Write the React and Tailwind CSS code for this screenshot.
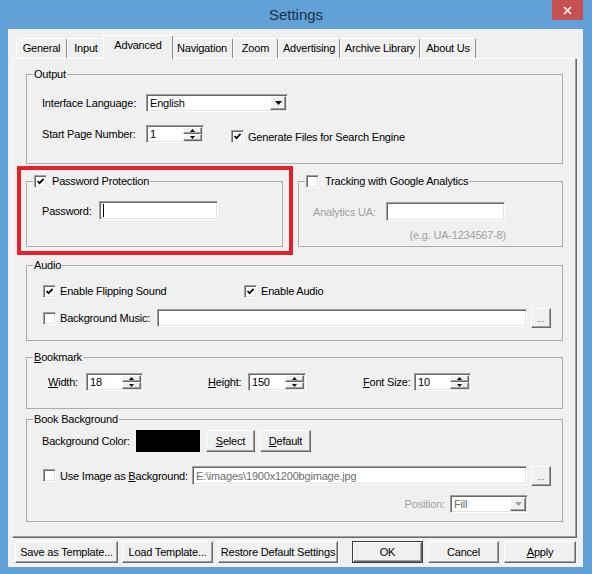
import React from "react";

const raised = "bg-[#f0f0f0] border border-t-white border-l-white border-r-[#696969] border-b-[#696969] shadow-[inset_-1px_-1px_0_#a0a0a0]";
const sunken = "border border-t-[#a0a0a0] border-l-[#a0a0a0] border-r-white border-b-white shadow-[inset_1px_1px_0_#696969,inset_-1px_-1px_0_#e3e3e3]";

const TABS = [
    ["General", 51], ["Input", 38], ["Advanced", 66], ["Navigation", 62],
    ["Zoom", 45], ["Advertising", 62], ["Archive Library", 80], ["About Us", 56],
];

function Check({ checked }) {
    return (
        <span className={`inline-flex w-[13px] h-[13px] shrink-0 items-center justify-center bg-white ${sunken}`}>
            {checked && (
                <svg width="9" height="9" viewBox="0 0 9 9">
                    <path d="M1.5 4 L3.5 6.2 L7.6 1.8" stroke="#000" strokeWidth="1.7" fill="none" />
                </svg>
            )}
        </span>
    );
}

function Tri({ up, w = 5, h = 3, color = "#000" }) {
    return (
        <svg width={w} height={h} viewBox={`0 0 ${w} ${h}`}>
            <polygon points={up ? `0,${h} ${w},${h} ${w / 2},0` : `0,0 ${w},0 ${w / 2},${h}`} fill={color} />
        </svg>
    );
}

function Spin({ value, width }) {
    return (
        <div className={`flex h-[18px] bg-white ${sunken} p-[1px]`} style={{ width }}>
            <span className="flex-1 pl-[2px] leading-[14px]">{value}</span>
            <div className="flex flex-col w-[19px]">
                <div className={`flex-1 flex items-center justify-center ${raised}`}><Tri up /></div>
                <div className={`flex-1 flex items-center justify-center ${raised}`}><Tri /></div>
            </div>
        </div>
    );
}

function Combo({ value, width, disabled }) {
    return (
        <div className={`flex h-[18px] bg-white ${sunken} p-[1px]`} style={{ width }}>
            <span className={`flex-1 pl-[2px] leading-[14px] ${disabled ? "text-[#6d6d6d]" : ""}`}>{value}</span>
            <div className={`w-[16px] flex items-center justify-center ${raised}`}>
                <Tri w={7} h={4} color={disabled ? "#a0a0a0" : "#000"} />
            </div>
        </div>
    );
}

function Dots() {
    return (
        <div className={`w-[20px] h-[20px] flex items-end justify-center pb-[3px] text-[9px] leading-[9px] text-[#6d6d6d] ${raised}`}>...</div>
    );
}

function Group({ title, className = "", children }) {
    return (
        <fieldset className={`border border-[#acacac] ${className}`}>
            <legend className="ml-[6px] px-[1px] leading-[14px]">{title}</legend>
            {children}
        </fieldset>
    );
}

function Btn({ children, width, className = "" }) {
    return (
        <div className={`h-[22px] flex items-center justify-center ${raised} ${className}`} style={{ width }}>
            {children}
        </div>
    );
}

export default function App() {
    return (
        <div className="w-[592px] h-[574px] bg-[#62a0d8] flex flex-col font-['Liberation_Sans',Arial,sans-serif] text-[11px] leading-[14px] text-black tracking-[-0.2px]">
            {/* title bar */}
            <div className="h-[29px] relative flex items-center justify-center">
                <span className="text-[15px] tracking-normal text-[#1d3047]">Settings</span>
                <div className="absolute right-[9px] top-0 w-[31px] h-[20px] bg-[#c75050] flex items-center justify-center">
                    <svg width="9" height="9" viewBox="0 0 9 9">
                        <path d="M1 1 L8 8 M8 1 L1 8" stroke="#fff" strokeWidth="1.6" />
                    </svg>
                </div>
            </div>

            {/* client */}
            <div className="ml-[8px] mr-[9px] h-[538px] bg-[#f0f0f0] flex flex-col pt-[6px] pl-[4px] pr-[7px]">
                {/* tabs */}
                <div className="h-[23px] flex items-end pl-[4px]">
                    {TABS.map(([name, w]) => name === "Advanced" ? (
                        <div key={name} className="relative z-10 -mx-[2px] -mb-[1px] h-[24px] pt-[2px] text-center bg-[#f0f0f0] border border-b-0 border-t-white border-l-white border-r-[#8a8a8a] rounded-t-[2px]" style={{ width: w + 4 }}>
                            {name}
                        </div>
                    ) : (
                        <div key={name} className="h-[20px] pt-[2px] text-center border border-b-0 border-t-white border-l-white border-r-[#8a8a8a] rounded-t-[2px]" style={{ width: w }}>
                            {name}
                        </div>
                    ))}
                </div>

                {/* tab page */}
                <div className="h-[479px] border border-t-white border-l-white border-r-[#a0a0a0] border-b-[#a0a0a0] shadow-[1px_1px_0_#696969] pt-[8px] pl-[13px] pr-[12px] flex flex-col">
                    <Group title="Output" className="h-[97px]">
                        <div className="pt-[13px] pl-[15px]">
                            <div className="flex items-center h-[18px]">
                                <span className="w-[104px]">Interface Language:</span>
                                <Combo value="English" width={142} />
                            </div>
                            <div className="flex items-center h-[18px] mt-[13px]">
                                <span className="w-[104px]">Start Page Number:</span>
                                <Spin value="1" width={58} />
                                <span className="ml-[27px] mt-[5px] flex items-center gap-[4px]">
                                    <Check checked />
                                    <span>Generate Files for Search Engine</span>
                                </span>
                            </div>
                        </div>
                    </Group>

                    <div className="flex gap-[15px] mt-[10px]">
                        <div className="relative">
                            <Group title={<span className="flex items-center gap-[5px]"><Check checked /><span>Password Protection</span></span>} className="w-[257px] h-[73px]">
                                <div className="pt-[13px] pl-[15px] flex items-center">
                                    <span className="w-[57px]">Password:</span>
                                    <div className={`w-[119px] h-[19px] bg-white ${sunken} flex items-center pl-[3px]`}>
                                        <span className="w-[1px] h-[13px] bg-black" />
                                    </div>
                                </div>
                            </Group>
                            <div className="absolute -left-[9px] -top-[8px] -right-[10px] -bottom-[8px] border-4 border-[#e3212b] pointer-events-none" />
                        </div>
                        <Group title={<span className="flex items-center gap-[6px]"><Check /><span>Tracking with Google Analytics</span></span>} className="w-[265px] h-[73px]">
                            <div className="pt-[14px] pl-[14px] flex items-center">
                                <span className="w-[73px] text-[#a0a0a0]">Analytics UA:</span>
                                <div className={`w-[119px] h-[19px] bg-white ${sunken}`} />
                            </div>
                            <div className="mt-[7px] pr-[56px] text-right text-[#a0a0a0]">(e.g. UA-1234567-8)</div>
                        </Group>
                    </div>

                    <Group title="Audio" className="h-[83px] mt-[11px]">
                        <div className="pt-[12px] pl-[16px]">
                            <div className="flex items-center h-[14px]">
                                <span className="w-[201px] flex items-center gap-[4px]"><Check checked /><span>Enable Flipping Sound</span></span>
                                <span className="flex items-center gap-[4px]"><Check checked /><span>Enable Audio</span></span>
                            </div>
                            <div className="flex items-center h-[20px] mt-[10px]">
                                <span className="w-[114px] flex items-center gap-[4px]"><Check /><span>Background Music:</span></span>
                                <div className={`w-[370px] h-[18px] bg-white ${sunken}`} />
                                <div className="ml-[4px]"><Dots /></div>
                            </div>
                        </div>
                    </Group>

                    <Group title={<span><span className="underline">B</span>ookmark</span>} className="h-[59px] mt-[9px]">
                        <div className="pt-[9px] pl-[21px] flex items-center">
                            <span className="w-[38px]"><span className="underline">W</span>idth:</span>
                            <Spin value="18" width={57} />
                            <span className="w-[40px] ml-[65px]"><span className="underline">H</span>eight:</span>
                            <Spin value="150" width={58} />
                            <span className="w-[51px] ml-[57px]"><span className="underline">F</span>ont Size:</span>
                            <Spin value="10" width={57} />
                        </div>
                    </Group>

                    <Group title="Book Background" className="h-[110px] mt-[3px]">
                        <div className="pt-[4px]">
                            <div className="flex items-center h-[22px] pl-[15px]">
                                <span className="w-[94px]">Background Color:</span>
                                <div className="w-[64px] h-[22px] bg-black" />
                                <Btn width={49} className="ml-[6px]"><span><span className="underline">S</span>elect</span></Btn>
                                <Btn width={51} className="ml-[5px]"><span><span className="underline">D</span>efault</span></Btn>
                            </div>
                            <div className="flex items-center h-[21px] mt-[13px] pl-[16px]">
                                <span className="w-[149px] flex items-center gap-[4px]"><Check /><span>Use Image as <span className="underline">B</span>ackground:</span></span>
                                <div className={`w-[335px] h-[19px] bg-white ${sunken} pl-[3px] flex items-center text-[#6d6d6d]`}>E:\images\1900x1200bgimage.jpg</div>
                                <div className="ml-[4px]"><Dots /></div>
                            </div>
                            <div className="flex items-center justify-end h-[19px] mt-[8px] pr-[34px]">
                                <span className="text-[#a0a0a0] mr-[5px]">Position:</span>
                                <Combo value="Fill" width={78} disabled />
                            </div>
                        </div>
                    </Group>
                </div>

                {/* buttons */}
                <div className="flex mt-[4px] pl-[3px]">
                    <Btn width={103}>Save as Template...</Btn>
                    <Btn width={91} className="ml-[4px]">Load Template...</Btn>
                    <Btn width={120} className="ml-[5px]">Restore Default Settings</Btn>
                    <div className="ml-[14px] w-[71px] h-[22px] border border-[#3c3c3c] flex">
                        <div className={`flex-1 flex items-center justify-center ${raised}`}>OK</div>
                    </div>
                    <Btn width={71} className="ml-[5px]">Cancel</Btn>
                    <Btn width={72} className="ml-[5px]"><span><span className="underline">A</span>pply</span></Btn>
                </div>
            </div>
        </div>
    );
}
